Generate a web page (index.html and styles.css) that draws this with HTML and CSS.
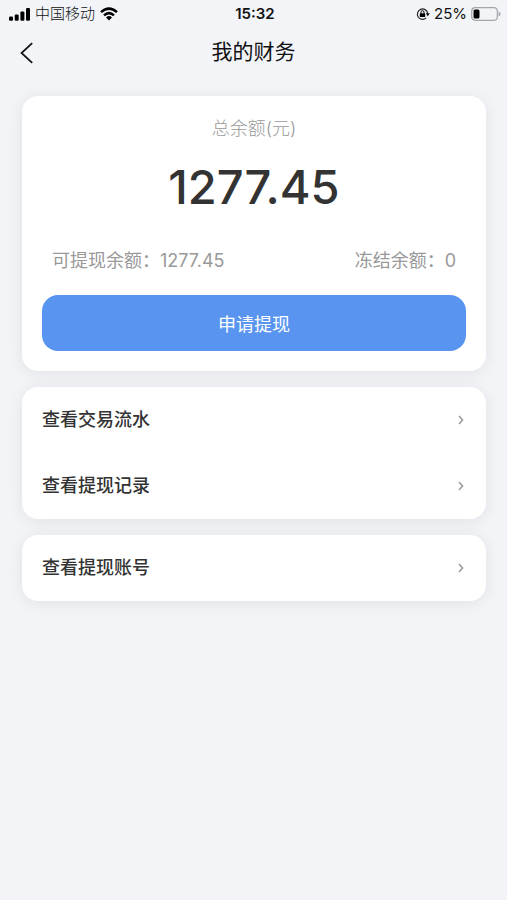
FILE: index.html
```html
<!DOCTYPE html>
<html lang="zh-CN">
  <head>
    <meta charset="utf-8">
    <meta name="viewport" content="width=device-width, initial-scale=1">
    <title>我的财务</title>
    <link rel="stylesheet" href="styles.css">
  </head>
  <body>
    <div class="status-bar">
      <div class="status-left">
        <svg width="21" height="14" viewBox="0 0 21 14" aria-hidden="true">
          <rect x="0" y="9.5" width="4" height="4.2" rx="1.2"/>
          <rect x="5.7" y="7.6" width="4" height="6.1" rx="1.2"/>
          <rect x="11.4" y="4.4" width="4" height="9.3" rx="1.2"/>
          <rect x="17" y="1" width="4" height="12.7" rx="1.2"/>
        </svg>
        <span class="carrier">中国移动</span>
        <svg width="18" height="14" viewBox="0 0 18 14" aria-hidden="true">
          <g fill="none" stroke="#000" stroke-width="2.5">
            <path d="M1 5.1Q9-1.9 17 5.1"/>
            <path d="M4 8.4Q9 3.8 14 8.4"/>
          </g>
          <path d="M6 10.4Q9 7.8 12 10.4L9 13.5Z"/>
        </svg>
      </div>
      <div class="status-time">15:32</div>
      <div class="status-right">
        <svg width="14" height="14" viewBox="0 0 14 14" aria-hidden="true">
          <path d="M10.2 10.9A5.2 5.2 0 1 1 11.7 6.2" fill="none" stroke="#222" stroke-width="1.2"/>
          <path d="M9.8 6.2h4l-2 3z"/>
          <rect x="3.8" y="6.2" width="5.4" height="3.8" rx=".6"/>
          <path d="M5 6.6V5.2a1.5 1.5 0 0 1 3 0v1.4" fill="none" stroke="#000"/>
        </svg>
        <span>25%</span>
        <svg width="30" height="14" viewBox="0 0 30 14" aria-hidden="true">
          <rect x=".7" y=".7" width="25.6" height="12.6" rx="3.5" fill="none" stroke="#a5a6a9" stroke-width="1.2"/>
          <rect x="2.5" y="2.5" width="6" height="9" rx="1.5"/>
          <path d="M27.6 4.6q2 .8 2 2.4t-2 2.4z" fill="#a5a6a9"/>
        </svg>
      </div>
    </div>

    <header class="nav">
      <button class="back" type="button" aria-label="返回">
        <svg width="14" height="22" viewBox="0 0 14 22" aria-hidden="true">
          <path d="M12.2 1.2L1.5 11l10.7 9.8" fill="none" stroke="#111" stroke-width="1.7"/>
        </svg>
      </button>
      <h1 class="title">我的财务</h1>
    </header>

    <main class="content">
      <section class="card balance">
        <p class="label">总余额(元)</p>
        <p class="amount">1277.45</p>
        <div class="detail">
          <span>可提现余额：1277.45</span>
          <span>冻结余额：0</span>
        </div>
        <button class="withdraw" type="button">申请提现</button>
      </section>

      <nav class="card menu">
        <a class="menu-item" href="#">查看交易流水
          <svg class="arrow" width="6" height="10" viewBox="0 0 6 10" aria-hidden="true"><path d="M1 1l3.6 4L1 9"/></svg>
        </a>
        <a class="menu-item" href="#">查看提现记录
          <svg class="arrow" width="6" height="10" viewBox="0 0 6 10" aria-hidden="true"><path d="M1 1l3.6 4L1 9"/></svg>
        </a>
      </nav>

      <nav class="card menu">
        <a class="menu-item" href="#">查看提现账号
          <svg class="arrow" width="6" height="10" viewBox="0 0 6 10" aria-hidden="true"><path d="M1 1l3.6 4L1 9"/></svg>
        </a>
      </nav>
    </main>
  </body>
</html>
```
FILE: styles.css
```css
* {
  box-sizing: border-box;
}
body {
  margin: 0;
  background: #f2f4f8;
  color: #333;
  font-family: Inter, "Noto Sans CJK SC", sans-serif;
  font-size: 18px;
  line-height: 26px;
}
h1, p {
  margin: 0;
}
button {
  border: 0;
  font-family: inherit;
  cursor: pointer;
}

/* status bar */
.status-bar {
  display: grid;
  grid-template-columns: 1fr auto 1fr;
  align-items: center;
  height: 28px;
  padding: 0 6px 0 9px;
  color: #111;
  font-size: 15px;
}
.status-left,
.status-right {
  display: flex;
  align-items: center;
  gap: 5px;
}
.status-right {
  justify-content: flex-end;
  gap: 4px;
}
.status-time {
  font-weight: 600;
}
.carrier {
  font-weight: 300;
}

/* title bar */
.nav {
  display: grid;
  grid-template-columns: 48px 1fr 48px;
  align-items: center;
  height: 48px;
}
.back {
  display: flex;
  padding: 14px 14px 12px 20px;
  background: none;
}
.title {
  color: #111;
  font-size: 21px;
  font-weight: 400;
  text-align: center;
}

/* cards */
.content {
  display: flex;
  flex-direction: column;
  gap: 16px;
  padding: 20px 21px 20px 22px;
}
.card {
  border-radius: 16px;
  background: #fff;
  box-shadow: 0 2px 16px rgba(0, 0, 0, 0.08);
}
.balance {
  padding: 20px;
  text-align: center;
}
.label,
.detail {
  color: #999;
}
.label {
  font-weight: 300;
}
.amount {
  margin: 15px 0 31px;
  font-size: 47px;
  font-weight: 500;
  line-height: 60px;
}
.detail {
  display: flex;
  justify-content: space-between;
  padding: 0 10px;
}
.withdraw {
  width: 100%;
  height: 56px;
  margin-top: 21px;
  border-radius: 16px;
  background: #5894f0;
  color: #fff;
  font-size: 18px;
}
.menu-item {
  display: flex;
  align-items: center;
  justify-content: space-between;
  height: 66px;
  padding: 0 22px 0 20px;
  color: #333;
  font-weight: 500;
  text-decoration: none;
}
.arrow {
  fill: none;
  stroke: #999;
  stroke-width: 1.5;
}
```
